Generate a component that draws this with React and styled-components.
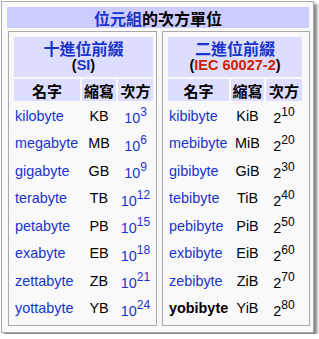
import React from 'react';
import styled, { createGlobalStyle } from 'styled-components';

const GlobalStyle = createGlobalStyle`
  body {
    margin: 0;
    background: #fff;
    font-family: "Liberation Sans", Arial, "Noto Sans CJK TC", sans-serif;
  }
`

const Page = styled.div`
  padding: 1px;
`

const Frame = styled.div`
  box-sizing: border-box;
  width: 313px;
  border: 1px solid #aaa;
  background: #f9f9f9;
  padding: 5px 3px 6px 5px;
  box-shadow: 3px 3px 3px rgba(0, 0, 0, 0.5);
`

const Title = styled.div`
  width: 302px;
  height: 21px;
  background: #ccf;
  display: flex;
  align-items: center;
  justify-content: center;
  font-family: "Noto Sans CJK TC", sans-serif;
  font-size: 16px;
  font-weight: bold;
  color: #000;
`

const Link = styled.span`
  color: ${p => (p.red ? '#cc2200' : '#1a33cc')};
`

const Columns = styled.div`
  display: flex;
  gap: 5px;
  margin: 3px 0 0 1px;
`

const Cell = styled.div`
  box-sizing: border-box;
  width: ${p => p.width}px;
  border: 1px solid #aaa;
  background: #f9f9f9;
  padding: 5px 0 4px 5px;
`

const Grid = styled.div`
  display: grid;
  grid-template-columns: ${p => p.cols};
  grid-template-rows: 40px 22px;
  grid-auto-rows: 25.5px;
  column-gap: 2px;
  row-gap: 2px;
  align-items: center;
`

const Group = styled.div`
  grid-column: 1 / -1;
  align-self: stretch;
  background: #ddf;
  display: flex;
  flex-direction: column;
  align-items: center;
  justify-content: center;
  font-weight: bold;
  line-height: 17px;
`

const GroupName = styled.div`
  font-family: "Noto Sans CJK TC", sans-serif;
  font-size: 16px;
  color: #1a33cc;
`

const GroupCode = styled.div`
  font-size: 14.5px;
  color: #000;
`

const Head = styled.div`
  align-self: stretch;
  background: #ddf;
  display: flex;
  align-items: center;
  justify-content: center;
  font-family: "Noto Sans CJK TC", sans-serif;
  font-size: 15px;
  font-weight: bold;
  color: #000;
`

const Name = styled.div`
  padding-left: 1px;
  font-size: 14.4px;
  white-space: nowrap;
  color: ${p => (p.self ? '#000' : '#1a33cc')};
  font-weight: ${p => (p.self ? 'bold' : 'normal')};
`

const Abbr = styled.div`
  text-align: center;
  font-size: 14.4px;
  color: #000;
`

const Power = styled.div`
  text-align: center;
  font-size: 14.4px;
  white-space: nowrap;
  color: ${p => (p.blue ? '#1a33cc' : '#000')};
`

const Sup = styled.sup`
  font-size: 12px;
  line-height: 1;
  vertical-align: 6.5px;
`

const decimal = [
  ['kilobyte', 'KB', 3],
  ['megabyte', 'MB', 6],
  ['gigabyte', 'GB', 9],
  ['terabyte', 'TB', 12],
  ['petabyte', 'PB', 15],
  ['exabyte', 'EB', 18],
  ['zettabyte', 'ZB', 21],
  ['yottabyte', 'YB', 24],
]

const binary = [
  ['kibibyte', 'KiB', 10],
  ['mebibyte', 'MiB', 20],
  ['gibibyte', 'GiB', 30],
  ['tebibyte', 'TiB', 40],
  ['pebibyte', 'PiB', 50],
  ['exbibyte', 'EiB', 60],
  ['zebibyte', 'ZiB', 70],
  ['yobibyte', 'YiB', 80],
]

function PrefixTable({ width, cols, title, code, red, base, rows, blue }) {
  return (
    <Cell width={width}>
      <Grid cols={cols}>
        <Group>
          <GroupName>{title}</GroupName>
          <GroupCode>(<Link red={red}>{code}</Link>)</GroupCode>
        </Group>
        <Head>名字</Head>
        <Head>縮寫</Head>
        <Head>次方</Head>
        {rows.map(([name, abbr, exp]) => (
          <React.Fragment key={name}>
            <Name self={name === 'yobibyte'}>{name}</Name>
            <Abbr>{abbr}</Abbr>
            <Power blue={blue}>{base}<Sup>{exp}</Sup></Power>
          </React.Fragment>
        ))}
      </Grid>
    </Cell>
  )
}

export default function App() {
  return (
    <Page>
      <GlobalStyle />
      <Frame>
        <Title><Link>位元組</Link>的次方單位</Title>
        <Columns>
          <PrefixTable
            width={149}
            cols="66px 34px 35px"
            title="十進位前綴"
            code="SI"
            base="10"
            rows={decimal}
            blue
          />
          <PrefixTable
            width={148}
            cols="61px 33px 36px"
            title="二進位前綴"
            code="IEC 60027-2"
            red
            base="2"
            rows={binary}
          />
        </Columns>
      </Frame>
    </Page>
  )
}
